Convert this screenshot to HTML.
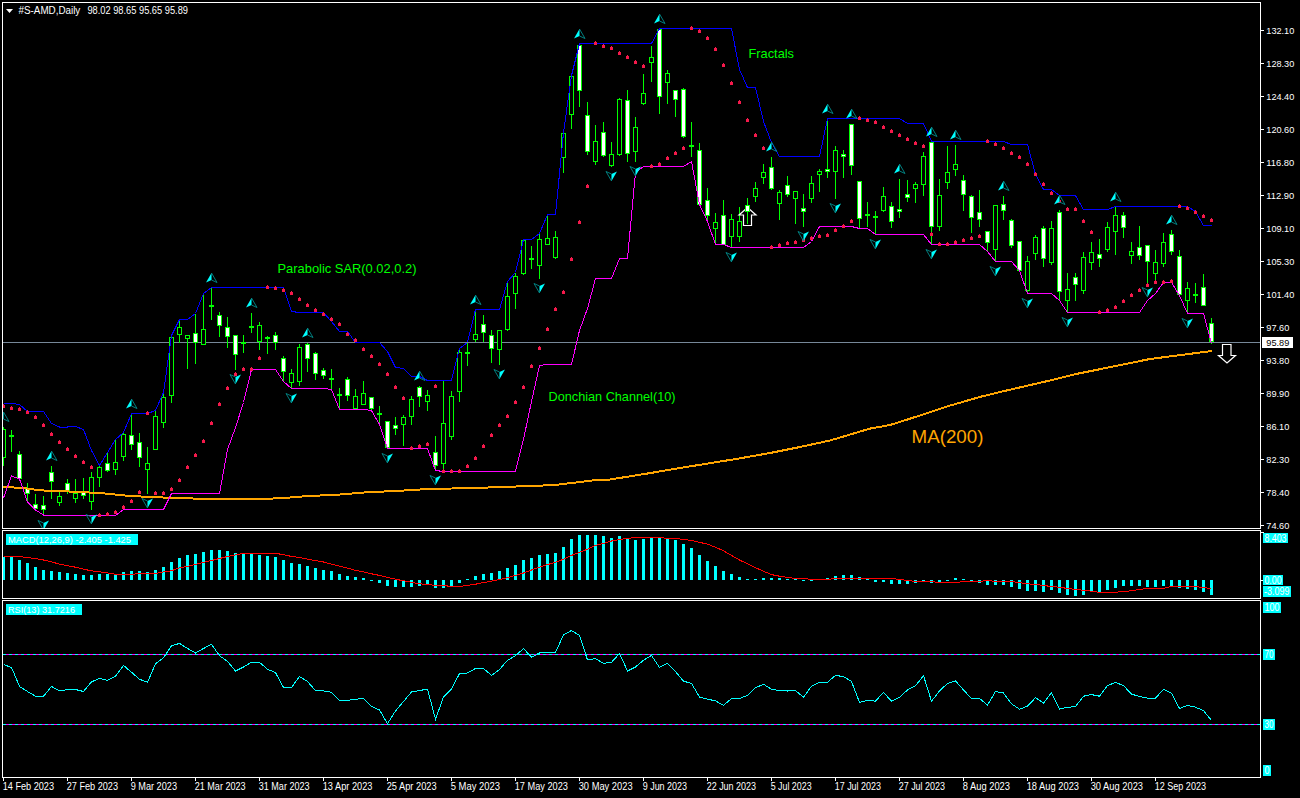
<!DOCTYPE html>
<html><head><meta charset="utf-8"><title>AMD Daily</title>
<style>html,body{margin:0;padding:0;background:#000;width:1300px;height:798px;overflow:hidden}</style>
</head><body><svg width="1300" height="798" viewBox="0 0 1300 798" style="display:block"><rect width="1300" height="798" fill="#000"/><defs><clipPath id="cm"><rect x="3" y="3" width="1257" height="525"/></clipPath><clipPath id="cd"><rect x="3" y="531" width="1257" height="67"/></clipPath><clipPath id="cr"><rect x="3" y="601" width="1257" height="176"/></clipPath></defs><g clip-path="url(#cm)"><rect x="3" y="342" width="1257" height="1" fill="#778899"/><g shape-rendering="crispEdges"><rect x="3" y="427" width="1" height="39" fill="#00FF00"/><rect x="1" y="429" width="5" height="29" fill="#00FF00"/><rect x="2" y="430" width="3" height="27" fill="#000000"/><rect x="11" y="430" width="1" height="22" fill="#00FF00"/><rect x="9" y="435" width="5" height="2" fill="#00FF00"/><rect x="19" y="451" width="1" height="28" fill="#00FF00"/><rect x="17" y="454" width="5" height="25" fill="#00FF00"/><rect x="18" y="455" width="3" height="23" fill="#FFFFFF"/><rect x="27" y="483" width="1" height="19" fill="#00FF00"/><rect x="25" y="488" width="5" height="6" fill="#00FF00"/><rect x="26" y="489" width="3" height="4" fill="#FFFFFF"/><rect x="35" y="494" width="1" height="16" fill="#00FF00"/><rect x="33" y="504" width="5" height="5" fill="#00FF00"/><rect x="34" y="505" width="3" height="3" fill="#FFFFFF"/><rect x="43" y="496" width="1" height="20" fill="#00FF00"/><rect x="41" y="505" width="5" height="5" fill="#00FF00"/><rect x="42" y="506" width="3" height="3" fill="#FFFFFF"/><rect x="51" y="466" width="1" height="33" fill="#00FF00"/><rect x="49" y="472" width="5" height="10" fill="#00FF00"/><rect x="50" y="473" width="3" height="8" fill="#FFFFFF"/><rect x="59" y="492" width="1" height="14" fill="#00FF00"/><rect x="57" y="496" width="5" height="7" fill="#00FF00"/><rect x="58" y="497" width="3" height="5" fill="#000000"/><rect x="67" y="479" width="1" height="15" fill="#00FF00"/><rect x="65" y="483" width="5" height="8" fill="#00FF00"/><rect x="66" y="484" width="3" height="6" fill="#FFFFFF"/><rect x="75" y="479" width="1" height="24" fill="#00FF00"/><rect x="73" y="493" width="5" height="6" fill="#00FF00"/><rect x="74" y="494" width="3" height="4" fill="#000000"/><rect x="83" y="478" width="1" height="21" fill="#00FF00"/><rect x="81" y="492" width="5" height="4" fill="#00FF00"/><rect x="82" y="493" width="3" height="2" fill="#FFFFFF"/><rect x="91" y="472" width="1" height="38" fill="#00FF00"/><rect x="89" y="477" width="5" height="25" fill="#00FF00"/><rect x="90" y="478" width="3" height="23" fill="#000000"/><rect x="99" y="466" width="1" height="21" fill="#00FF00"/><rect x="97" y="467" width="5" height="11" fill="#00FF00"/><rect x="98" y="468" width="3" height="9" fill="#000000"/><rect x="107" y="453" width="1" height="19" fill="#00FF00"/><rect x="105" y="463" width="5" height="8" fill="#00FF00"/><rect x="106" y="464" width="3" height="6" fill="#FFFFFF"/><rect x="115" y="440" width="1" height="35" fill="#00FF00"/><rect x="113" y="462" width="5" height="8" fill="#00FF00"/><rect x="114" y="463" width="3" height="6" fill="#000000"/><rect x="123" y="433" width="1" height="28" fill="#00FF00"/><rect x="121" y="434" width="5" height="23" fill="#00FF00"/><rect x="122" y="435" width="3" height="21" fill="#000000"/><rect x="131" y="414" width="1" height="36" fill="#00FF00"/><rect x="129" y="435" width="5" height="10" fill="#00FF00"/><rect x="130" y="436" width="3" height="8" fill="#FFFFFF"/><rect x="139" y="433" width="1" height="34" fill="#00FF00"/><rect x="137" y="442" width="5" height="16" fill="#00FF00"/><rect x="138" y="443" width="3" height="14" fill="#FFFFFF"/><rect x="147" y="447" width="1" height="47" fill="#00FF00"/><rect x="145" y="463" width="5" height="7" fill="#00FF00"/><rect x="146" y="464" width="3" height="5" fill="#000000"/><rect x="155" y="411" width="1" height="39" fill="#00FF00"/><rect x="153" y="416" width="5" height="34" fill="#00FF00"/><rect x="154" y="417" width="3" height="32" fill="#000000"/><rect x="163" y="393" width="1" height="35" fill="#00FF00"/><rect x="161" y="397" width="5" height="26" fill="#00FF00"/><rect x="162" y="398" width="3" height="24" fill="#000000"/><rect x="171" y="336" width="1" height="67" fill="#00FF00"/><rect x="169" y="337" width="5" height="59" fill="#00FF00"/><rect x="170" y="338" width="3" height="57" fill="#000000"/><rect x="179" y="320" width="1" height="23" fill="#00FF00"/><rect x="177" y="327" width="5" height="8" fill="#00FF00"/><rect x="178" y="328" width="3" height="6" fill="#000000"/><rect x="187" y="335" width="1" height="34" fill="#00FF00"/><rect x="185" y="335" width="5" height="4" fill="#00FF00"/><rect x="186" y="336" width="3" height="2" fill="#000000"/><rect x="195" y="314" width="1" height="50" fill="#00FF00"/><rect x="193" y="333" width="5" height="10" fill="#00FF00"/><rect x="194" y="334" width="3" height="8" fill="#FFFFFF"/><rect x="203" y="294" width="1" height="51" fill="#00FF00"/><rect x="201" y="329" width="5" height="16" fill="#00FF00"/><rect x="202" y="330" width="3" height="14" fill="#000000"/><rect x="211" y="288" width="1" height="32" fill="#00FF00"/><rect x="209" y="305" width="5" height="2" fill="#00FF00"/><rect x="219" y="312" width="1" height="25" fill="#00FF00"/><rect x="217" y="315" width="5" height="11" fill="#00FF00"/><rect x="218" y="316" width="3" height="9" fill="#FFFFFF"/><rect x="227" y="317" width="1" height="31" fill="#00FF00"/><rect x="225" y="327" width="5" height="10" fill="#00FF00"/><rect x="226" y="328" width="3" height="8" fill="#FFFFFF"/><rect x="235" y="335" width="1" height="35" fill="#00FF00"/><rect x="233" y="335" width="5" height="20" fill="#00FF00"/><rect x="234" y="336" width="3" height="18" fill="#FFFFFF"/><rect x="243" y="335" width="1" height="18" fill="#00FF00"/><rect x="241" y="342" width="5" height="2" fill="#00FF00"/><rect x="251" y="313" width="1" height="20" fill="#00FF00"/><rect x="249" y="326" width="5" height="2" fill="#00FF00"/><rect x="259" y="322" width="1" height="28" fill="#00FF00"/><rect x="257" y="325" width="5" height="17" fill="#00FF00"/><rect x="258" y="326" width="3" height="15" fill="#000000"/><rect x="267" y="336" width="1" height="18" fill="#00FF00"/><rect x="265" y="337" width="5" height="2" fill="#00FF00"/><rect x="275" y="332" width="1" height="18" fill="#00FF00"/><rect x="273" y="335" width="5" height="8" fill="#00FF00"/><rect x="274" y="336" width="3" height="6" fill="#FFFFFF"/><rect x="283" y="356" width="1" height="26" fill="#00FF00"/><rect x="281" y="358" width="5" height="14" fill="#00FF00"/><rect x="282" y="359" width="3" height="12" fill="#FFFFFF"/><rect x="291" y="369" width="1" height="20" fill="#00FF00"/><rect x="289" y="373" width="5" height="10" fill="#00FF00"/><rect x="290" y="374" width="3" height="8" fill="#000000"/><rect x="299" y="344" width="1" height="42" fill="#00FF00"/><rect x="297" y="347" width="5" height="35" fill="#00FF00"/><rect x="298" y="348" width="3" height="33" fill="#000000"/><rect x="307" y="343" width="1" height="29" fill="#00FF00"/><rect x="305" y="344" width="5" height="15" fill="#00FF00"/><rect x="306" y="345" width="3" height="13" fill="#FFFFFF"/><rect x="315" y="352" width="1" height="28" fill="#00FF00"/><rect x="313" y="353" width="5" height="21" fill="#00FF00"/><rect x="314" y="354" width="3" height="19" fill="#FFFFFF"/><rect x="323" y="368" width="1" height="11" fill="#00FF00"/><rect x="321" y="370" width="5" height="6" fill="#00FF00"/><rect x="322" y="371" width="3" height="4" fill="#FFFFFF"/><rect x="331" y="369" width="1" height="21" fill="#00FF00"/><rect x="329" y="378" width="5" height="2" fill="#00FF00"/><rect x="339" y="388" width="1" height="22" fill="#00FF00"/><rect x="337" y="394" width="5" height="2" fill="#00FF00"/><rect x="347" y="377" width="1" height="24" fill="#00FF00"/><rect x="345" y="379" width="5" height="17" fill="#00FF00"/><rect x="346" y="380" width="3" height="15" fill="#FFFFFF"/><rect x="355" y="389" width="1" height="21" fill="#00FF00"/><rect x="353" y="396" width="5" height="13" fill="#00FF00"/><rect x="354" y="397" width="3" height="11" fill="#000000"/><rect x="363" y="381" width="1" height="24" fill="#00FF00"/><rect x="361" y="393" width="5" height="12" fill="#00FF00"/><rect x="362" y="394" width="3" height="10" fill="#000000"/><rect x="371" y="397" width="1" height="14" fill="#00FF00"/><rect x="369" y="397" width="5" height="12" fill="#00FF00"/><rect x="370" y="398" width="3" height="10" fill="#FFFFFF"/><rect x="379" y="406" width="1" height="19" fill="#00FF00"/><rect x="377" y="413" width="5" height="2" fill="#00FF00"/><rect x="387" y="421" width="1" height="28" fill="#00FF00"/><rect x="385" y="421" width="5" height="27" fill="#00FF00"/><rect x="386" y="422" width="3" height="25" fill="#FFFFFF"/><rect x="395" y="417" width="1" height="18" fill="#00FF00"/><rect x="393" y="425" width="5" height="4" fill="#00FF00"/><rect x="394" y="426" width="3" height="2" fill="#FFFFFF"/><rect x="403" y="415" width="1" height="31" fill="#00FF00"/><rect x="401" y="417" width="5" height="8" fill="#00FF00"/><rect x="402" y="418" width="3" height="6" fill="#000000"/><rect x="411" y="396" width="1" height="29" fill="#00FF00"/><rect x="409" y="399" width="5" height="18" fill="#00FF00"/><rect x="410" y="400" width="3" height="16" fill="#000000"/><rect x="419" y="386" width="1" height="21" fill="#00FF00"/><rect x="417" y="387" width="5" height="10" fill="#00FF00"/><rect x="418" y="388" width="3" height="8" fill="#FFFFFF"/><rect x="427" y="390" width="1" height="21" fill="#00FF00"/><rect x="425" y="395" width="5" height="7" fill="#00FF00"/><rect x="426" y="396" width="3" height="5" fill="#000000"/><rect x="435" y="436" width="1" height="35" fill="#00FF00"/><rect x="433" y="452" width="5" height="14" fill="#00FF00"/><rect x="434" y="453" width="3" height="12" fill="#FFFFFF"/><rect x="443" y="381" width="1" height="91" fill="#00FF00"/><rect x="441" y="423" width="5" height="41" fill="#00FF00"/><rect x="442" y="424" width="3" height="39" fill="#000000"/><rect x="451" y="391" width="1" height="49" fill="#00FF00"/><rect x="449" y="396" width="5" height="41" fill="#00FF00"/><rect x="450" y="397" width="3" height="39" fill="#000000"/><rect x="459" y="349" width="1" height="53" fill="#00FF00"/><rect x="457" y="352" width="5" height="40" fill="#00FF00"/><rect x="458" y="353" width="3" height="38" fill="#000000"/><rect x="467" y="343" width="1" height="23" fill="#00FF00"/><rect x="465" y="352" width="5" height="2" fill="#00FF00"/><rect x="475" y="310" width="1" height="32" fill="#00FF00"/><rect x="473" y="334" width="5" height="6" fill="#00FF00"/><rect x="474" y="335" width="3" height="4" fill="#000000"/><rect x="483" y="315" width="1" height="27" fill="#00FF00"/><rect x="481" y="324" width="5" height="9" fill="#00FF00"/><rect x="482" y="325" width="3" height="7" fill="#FFFFFF"/><rect x="491" y="330" width="1" height="33" fill="#00FF00"/><rect x="489" y="335" width="5" height="14" fill="#00FF00"/><rect x="490" y="336" width="3" height="12" fill="#FFFFFF"/><rect x="499" y="330" width="1" height="35" fill="#00FF00"/><rect x="497" y="330" width="5" height="20" fill="#00FF00"/><rect x="498" y="331" width="3" height="18" fill="#000000"/><rect x="507" y="282" width="1" height="49" fill="#00FF00"/><rect x="505" y="296" width="5" height="34" fill="#00FF00"/><rect x="506" y="297" width="3" height="32" fill="#000000"/><rect x="515" y="273" width="1" height="36" fill="#00FF00"/><rect x="513" y="276" width="5" height="18" fill="#00FF00"/><rect x="514" y="277" width="3" height="16" fill="#000000"/><rect x="523" y="240" width="1" height="35" fill="#00FF00"/><rect x="521" y="240" width="5" height="34" fill="#00FF00"/><rect x="522" y="241" width="3" height="32" fill="#000000"/><rect x="531" y="246" width="1" height="23" fill="#00FF00"/><rect x="529" y="258" width="5" height="2" fill="#00FF00"/><rect x="539" y="234" width="1" height="45" fill="#00FF00"/><rect x="537" y="239" width="5" height="27" fill="#00FF00"/><rect x="538" y="240" width="3" height="25" fill="#000000"/><rect x="547" y="215" width="1" height="30" fill="#00FF00"/><rect x="545" y="238" width="5" height="7" fill="#00FF00"/><rect x="546" y="239" width="3" height="5" fill="#000000"/><rect x="555" y="231" width="1" height="28" fill="#00FF00"/><rect x="553" y="237" width="5" height="21" fill="#00FF00"/><rect x="554" y="238" width="3" height="19" fill="#000000"/><rect x="563" y="133" width="1" height="40" fill="#00FF00"/><rect x="561" y="133" width="5" height="25" fill="#00FF00"/><rect x="562" y="134" width="3" height="23" fill="#000000"/><rect x="571" y="76" width="1" height="53" fill="#00FF00"/><rect x="569" y="76" width="5" height="39" fill="#00FF00"/><rect x="570" y="77" width="3" height="37" fill="#000000"/><rect x="579" y="44" width="1" height="63" fill="#00FF00"/><rect x="577" y="45" width="5" height="46" fill="#00FF00"/><rect x="578" y="46" width="3" height="44" fill="#FFFFFF"/><rect x="587" y="102" width="1" height="53" fill="#00FF00"/><rect x="585" y="115" width="5" height="37" fill="#00FF00"/><rect x="586" y="116" width="3" height="35" fill="#FFFFFF"/><rect x="595" y="125" width="1" height="40" fill="#00FF00"/><rect x="593" y="141" width="5" height="21" fill="#00FF00"/><rect x="594" y="142" width="3" height="19" fill="#000000"/><rect x="603" y="122" width="1" height="35" fill="#00FF00"/><rect x="601" y="132" width="5" height="24" fill="#00FF00"/><rect x="602" y="133" width="3" height="22" fill="#FFFFFF"/><rect x="611" y="142" width="1" height="25" fill="#00FF00"/><rect x="609" y="154" width="5" height="12" fill="#00FF00"/><rect x="610" y="155" width="3" height="10" fill="#000000"/><rect x="619" y="98" width="1" height="58" fill="#00FF00"/><rect x="617" y="99" width="5" height="56" fill="#00FF00"/><rect x="618" y="100" width="3" height="54" fill="#000000"/><rect x="627" y="90" width="1" height="72" fill="#00FF00"/><rect x="625" y="100" width="5" height="54" fill="#00FF00"/><rect x="626" y="101" width="3" height="52" fill="#FFFFFF"/><rect x="635" y="117" width="1" height="45" fill="#00FF00"/><rect x="633" y="127" width="5" height="25" fill="#00FF00"/><rect x="634" y="128" width="3" height="23" fill="#000000"/><rect x="643" y="74" width="1" height="31" fill="#00FF00"/><rect x="641" y="93" width="5" height="11" fill="#00FF00"/><rect x="642" y="94" width="3" height="9" fill="#000000"/><rect x="651" y="46" width="1" height="36" fill="#00FF00"/><rect x="649" y="57" width="5" height="6" fill="#00FF00"/><rect x="650" y="58" width="3" height="4" fill="#000000"/><rect x="659" y="29" width="1" height="85" fill="#00FF00"/><rect x="657" y="29" width="5" height="68" fill="#00FF00"/><rect x="658" y="30" width="3" height="66" fill="#FFFFFF"/><rect x="667" y="70" width="1" height="34" fill="#00FF00"/><rect x="665" y="73" width="5" height="10" fill="#00FF00"/><rect x="666" y="74" width="3" height="8" fill="#000000"/><rect x="675" y="90" width="1" height="27" fill="#00FF00"/><rect x="673" y="90" width="5" height="10" fill="#00FF00"/><rect x="674" y="91" width="3" height="8" fill="#FFFFFF"/><rect x="683" y="88" width="1" height="50" fill="#00FF00"/><rect x="681" y="89" width="5" height="48" fill="#00FF00"/><rect x="682" y="90" width="3" height="46" fill="#FFFFFF"/><rect x="691" y="122" width="1" height="35" fill="#00FF00"/><rect x="689" y="145" width="5" height="2" fill="#00FF00"/><rect x="699" y="143" width="1" height="62" fill="#00FF00"/><rect x="697" y="150" width="5" height="55" fill="#00FF00"/><rect x="698" y="151" width="3" height="53" fill="#FFFFFF"/><rect x="707" y="188" width="1" height="34" fill="#00FF00"/><rect x="705" y="200" width="5" height="16" fill="#00FF00"/><rect x="706" y="201" width="3" height="14" fill="#FFFFFF"/><rect x="715" y="213" width="1" height="32" fill="#00FF00"/><rect x="713" y="222" width="5" height="7" fill="#00FF00"/><rect x="714" y="223" width="3" height="5" fill="#000000"/><rect x="723" y="200" width="1" height="45" fill="#00FF00"/><rect x="721" y="215" width="5" height="30" fill="#00FF00"/><rect x="722" y="216" width="3" height="28" fill="#FFFFFF"/><rect x="731" y="214" width="1" height="34" fill="#00FF00"/><rect x="729" y="219" width="5" height="18" fill="#00FF00"/><rect x="730" y="220" width="3" height="16" fill="#000000"/><rect x="739" y="207" width="1" height="35" fill="#00FF00"/><rect x="737" y="221" width="5" height="16" fill="#00FF00"/><rect x="738" y="222" width="3" height="14" fill="#000000"/><rect x="747" y="198" width="1" height="26" fill="#00FF00"/><rect x="745" y="205" width="5" height="7" fill="#00FF00"/><rect x="746" y="206" width="3" height="5" fill="#FFFFFF"/><rect x="755" y="182" width="1" height="20" fill="#00FF00"/><rect x="753" y="188" width="5" height="9" fill="#00FF00"/><rect x="754" y="189" width="3" height="7" fill="#000000"/><rect x="763" y="164" width="1" height="20" fill="#00FF00"/><rect x="761" y="172" width="5" height="6" fill="#00FF00"/><rect x="762" y="173" width="3" height="4" fill="#000000"/><rect x="771" y="157" width="1" height="33" fill="#00FF00"/><rect x="769" y="167" width="5" height="22" fill="#00FF00"/><rect x="770" y="168" width="3" height="20" fill="#FFFFFF"/><rect x="779" y="190" width="1" height="30" fill="#00FF00"/><rect x="777" y="192" width="5" height="12" fill="#00FF00"/><rect x="778" y="193" width="3" height="10" fill="#000000"/><rect x="787" y="176" width="1" height="21" fill="#00FF00"/><rect x="785" y="185" width="5" height="10" fill="#00FF00"/><rect x="786" y="186" width="3" height="8" fill="#FFFFFF"/><rect x="795" y="191" width="1" height="33" fill="#00FF00"/><rect x="793" y="191" width="5" height="8" fill="#00FF00"/><rect x="794" y="192" width="3" height="6" fill="#000000"/><rect x="803" y="194" width="1" height="33" fill="#00FF00"/><rect x="801" y="208" width="5" height="4" fill="#00FF00"/><rect x="802" y="209" width="3" height="2" fill="#FFFFFF"/><rect x="811" y="176" width="1" height="27" fill="#00FF00"/><rect x="809" y="183" width="5" height="16" fill="#00FF00"/><rect x="810" y="184" width="3" height="14" fill="#000000"/><rect x="819" y="169" width="1" height="23" fill="#00FF00"/><rect x="817" y="171" width="5" height="4" fill="#00FF00"/><rect x="818" y="172" width="3" height="2" fill="#000000"/><rect x="827" y="119" width="1" height="59" fill="#00FF00"/><rect x="825" y="169" width="5" height="3" fill="#00FF00"/><rect x="826" y="170" width="3" height="1" fill="#FFFFFF"/><rect x="835" y="146" width="1" height="53" fill="#00FF00"/><rect x="833" y="150" width="5" height="22" fill="#00FF00"/><rect x="834" y="151" width="3" height="20" fill="#000000"/><rect x="843" y="150" width="1" height="28" fill="#00FF00"/><rect x="841" y="154" width="5" height="3" fill="#00FF00"/><rect x="842" y="155" width="3" height="1" fill="#FFFFFF"/><rect x="851" y="124" width="1" height="51" fill="#00FF00"/><rect x="849" y="124" width="5" height="42" fill="#00FF00"/><rect x="850" y="125" width="3" height="40" fill="#FFFFFF"/><rect x="859" y="181" width="1" height="48" fill="#00FF00"/><rect x="857" y="181" width="5" height="38" fill="#00FF00"/><rect x="858" y="182" width="3" height="36" fill="#FFFFFF"/><rect x="867" y="202" width="1" height="25" fill="#00FF00"/><rect x="865" y="214" width="5" height="2" fill="#00FF00"/><rect x="875" y="211" width="1" height="24" fill="#00FF00"/><rect x="873" y="216" width="5" height="2" fill="#00FF00"/><rect x="883" y="187" width="1" height="25" fill="#00FF00"/><rect x="881" y="196" width="5" height="15" fill="#00FF00"/><rect x="882" y="197" width="3" height="13" fill="#000000"/><rect x="891" y="202" width="1" height="26" fill="#00FF00"/><rect x="889" y="206" width="5" height="16" fill="#00FF00"/><rect x="890" y="207" width="3" height="14" fill="#FFFFFF"/><rect x="899" y="179" width="1" height="39" fill="#00FF00"/><rect x="897" y="209" width="5" height="3" fill="#00FF00"/><rect x="898" y="210" width="3" height="1" fill="#FFFFFF"/><rect x="907" y="180" width="1" height="22" fill="#00FF00"/><rect x="905" y="194" width="5" height="4" fill="#00FF00"/><rect x="906" y="195" width="3" height="2" fill="#FFFFFF"/><rect x="915" y="182" width="1" height="21" fill="#00FF00"/><rect x="913" y="184" width="5" height="5" fill="#00FF00"/><rect x="914" y="185" width="3" height="3" fill="#000000"/><rect x="923" y="152" width="1" height="44" fill="#00FF00"/><rect x="921" y="156" width="5" height="29" fill="#00FF00"/><rect x="922" y="157" width="3" height="27" fill="#000000"/><rect x="931" y="142" width="1" height="103" fill="#00FF00"/><rect x="929" y="142" width="5" height="85" fill="#00FF00"/><rect x="930" y="143" width="3" height="83" fill="#FFFFFF"/><rect x="939" y="179" width="1" height="52" fill="#00FF00"/><rect x="937" y="195" width="5" height="32" fill="#00FF00"/><rect x="938" y="196" width="3" height="30" fill="#000000"/><rect x="947" y="146" width="1" height="43" fill="#00FF00"/><rect x="945" y="172" width="5" height="11" fill="#00FF00"/><rect x="946" y="173" width="3" height="9" fill="#000000"/><rect x="955" y="145" width="1" height="31" fill="#00FF00"/><rect x="953" y="164" width="5" height="6" fill="#00FF00"/><rect x="954" y="165" width="3" height="4" fill="#000000"/><rect x="963" y="175" width="1" height="36" fill="#00FF00"/><rect x="961" y="180" width="5" height="15" fill="#00FF00"/><rect x="962" y="181" width="3" height="13" fill="#FFFFFF"/><rect x="971" y="195" width="1" height="38" fill="#00FF00"/><rect x="969" y="196" width="5" height="22" fill="#00FF00"/><rect x="970" y="197" width="3" height="20" fill="#FFFFFF"/><rect x="979" y="190" width="1" height="37" fill="#00FF00"/><rect x="977" y="212" width="5" height="8" fill="#00FF00"/><rect x="978" y="213" width="3" height="6" fill="#FFFFFF"/><rect x="987" y="231" width="1" height="21" fill="#00FF00"/><rect x="985" y="231" width="5" height="12" fill="#00FF00"/><rect x="986" y="232" width="3" height="10" fill="#FFFFFF"/><rect x="995" y="205" width="1" height="57" fill="#00FF00"/><rect x="993" y="205" width="5" height="45" fill="#00FF00"/><rect x="994" y="206" width="3" height="43" fill="#000000"/><rect x="1003" y="196" width="1" height="24" fill="#00FF00"/><rect x="1001" y="204" width="5" height="7" fill="#00FF00"/><rect x="1002" y="205" width="3" height="5" fill="#FFFFFF"/><rect x="1011" y="219" width="1" height="29" fill="#00FF00"/><rect x="1009" y="220" width="5" height="26" fill="#00FF00"/><rect x="1010" y="221" width="3" height="24" fill="#FFFFFF"/><rect x="1019" y="241" width="1" height="30" fill="#00FF00"/><rect x="1017" y="241" width="5" height="30" fill="#00FF00"/><rect x="1018" y="242" width="3" height="28" fill="#FFFFFF"/><rect x="1027" y="256" width="1" height="38" fill="#00FF00"/><rect x="1025" y="261" width="5" height="30" fill="#00FF00"/><rect x="1026" y="262" width="3" height="28" fill="#000000"/><rect x="1035" y="235" width="1" height="25" fill="#00FF00"/><rect x="1033" y="237" width="5" height="17" fill="#00FF00"/><rect x="1034" y="238" width="3" height="15" fill="#000000"/><rect x="1043" y="226" width="1" height="41" fill="#00FF00"/><rect x="1041" y="228" width="5" height="31" fill="#00FF00"/><rect x="1042" y="229" width="3" height="29" fill="#FFFFFF"/><rect x="1051" y="221" width="1" height="44" fill="#00FF00"/><rect x="1049" y="228" width="5" height="35" fill="#00FF00"/><rect x="1050" y="229" width="3" height="33" fill="#000000"/><rect x="1059" y="210" width="1" height="91" fill="#00FF00"/><rect x="1057" y="212" width="5" height="80" fill="#00FF00"/><rect x="1058" y="213" width="3" height="78" fill="#FFFFFF"/><rect x="1067" y="273" width="1" height="40" fill="#00FF00"/><rect x="1065" y="289" width="5" height="12" fill="#00FF00"/><rect x="1066" y="290" width="3" height="10" fill="#000000"/><rect x="1075" y="273" width="1" height="28" fill="#00FF00"/><rect x="1073" y="277" width="5" height="8" fill="#00FF00"/><rect x="1074" y="278" width="3" height="6" fill="#FFFFFF"/><rect x="1083" y="252" width="1" height="42" fill="#00FF00"/><rect x="1081" y="257" width="5" height="34" fill="#00FF00"/><rect x="1082" y="258" width="3" height="32" fill="#000000"/><rect x="1091" y="242" width="1" height="28" fill="#00FF00"/><rect x="1089" y="252" width="5" height="11" fill="#00FF00"/><rect x="1090" y="253" width="3" height="9" fill="#000000"/><rect x="1099" y="239" width="1" height="28" fill="#00FF00"/><rect x="1097" y="254" width="5" height="5" fill="#00FF00"/><rect x="1098" y="255" width="3" height="3" fill="#FFFFFF"/><rect x="1107" y="222" width="1" height="30" fill="#00FF00"/><rect x="1105" y="227" width="5" height="23" fill="#00FF00"/><rect x="1106" y="228" width="3" height="21" fill="#000000"/><rect x="1115" y="207" width="1" height="48" fill="#00FF00"/><rect x="1113" y="215" width="5" height="17" fill="#00FF00"/><rect x="1114" y="216" width="3" height="15" fill="#000000"/><rect x="1123" y="212" width="1" height="26" fill="#00FF00"/><rect x="1121" y="215" width="5" height="13" fill="#00FF00"/><rect x="1122" y="216" width="3" height="11" fill="#FFFFFF"/><rect x="1131" y="242" width="1" height="22" fill="#00FF00"/><rect x="1129" y="251" width="5" height="5" fill="#00FF00"/><rect x="1130" y="252" width="3" height="3" fill="#000000"/><rect x="1139" y="226" width="1" height="34" fill="#00FF00"/><rect x="1137" y="247" width="5" height="9" fill="#00FF00"/><rect x="1138" y="248" width="3" height="7" fill="#FFFFFF"/><rect x="1147" y="245" width="1" height="38" fill="#00FF00"/><rect x="1145" y="245" width="5" height="17" fill="#00FF00"/><rect x="1146" y="246" width="3" height="15" fill="#FFFFFF"/><rect x="1155" y="250" width="1" height="31" fill="#00FF00"/><rect x="1153" y="262" width="5" height="12" fill="#00FF00"/><rect x="1154" y="263" width="3" height="10" fill="#000000"/><rect x="1163" y="233" width="1" height="34" fill="#00FF00"/><rect x="1161" y="242" width="5" height="22" fill="#00FF00"/><rect x="1162" y="243" width="3" height="20" fill="#000000"/><rect x="1171" y="230" width="1" height="25" fill="#00FF00"/><rect x="1169" y="234" width="5" height="18" fill="#00FF00"/><rect x="1170" y="235" width="3" height="16" fill="#FFFFFF"/><rect x="1179" y="250" width="1" height="46" fill="#00FF00"/><rect x="1177" y="256" width="5" height="39" fill="#00FF00"/><rect x="1178" y="257" width="3" height="37" fill="#FFFFFF"/><rect x="1187" y="282" width="1" height="32" fill="#00FF00"/><rect x="1185" y="288" width="5" height="13" fill="#00FF00"/><rect x="1186" y="289" width="3" height="11" fill="#000000"/><rect x="1195" y="283" width="1" height="20" fill="#00FF00"/><rect x="1193" y="294" width="5" height="2" fill="#00FF00"/><rect x="1203" y="274" width="1" height="32" fill="#00FF00"/><rect x="1201" y="287" width="5" height="19" fill="#00FF00"/><rect x="1202" y="288" width="3" height="17" fill="#FFFFFF"/><rect x="1211" y="318" width="1" height="26" fill="#00FF00"/><rect x="1209" y="323" width="5" height="19" fill="#00FF00"/><rect x="1210" y="324" width="3" height="17" fill="#FFFFFF"/></g><polyline points="3,487 24,488 40,490.4 60,491 77,492 100,493 130,496 160,497.4 190,498.4 220,499.4 250,499.4 276,498.4 292,497.4 308,496 332,495 348,494 356,493 372,492 396,491 412,490 428,489 476,488 500,487 532,486 555,485 563,484 572,483 580,482 596,480 610,479.5 650,473.1 680,468 710,463.2 740,458.3 770,453 800,447 830,440.5 870,428.6 890,425 920,415.5 950,405.6 980,396.9 1000,392 1050,380.5 1076,374 1100,369.2 1150,359 1212,351" fill="none" stroke="#FFA500" stroke-width="2" shape-rendering="crispEdges"/><polyline points="3.5,403.5 11.5,403.5 19.5,404.5 27.5,411.5 35.5,411.5 43.5,411.5 51.5,423.5 59.5,427 67.5,427 75.5,426.5 83.5,429.5 91.5,450.5 99.5,465.5 107.5,452.5 115.5,439.5 123.5,432.5 131.5,413.5 139.5,413.5 147.5,413.5 155.5,410.5 163.5,392.5 171.5,335.5 179.5,319.5 187.5,319.5 195.5,313.5 203.5,293.5 211.5,287.5 219.5,287.5 227.5,287.5 235.5,287.5 243.5,287.5 251.5,287.5 259.5,287.5 267.5,287.5 275.5,287.5 283.5,287.5 291.5,311.5 299.5,312.5 307.5,312.5 315.5,312.5 323.5,312.5 331.5,321.5 339.5,331.5 347.5,331.5 355.5,342.5 363.5,342.5 371.5,342.5 379.5,342.5 387.5,351.5 395.5,367.5 403.5,368.5 411.5,376.5 419.5,376.5 427.5,380.5 435.5,380.5 443.5,380.5 451.5,380.5 459.5,348.5 467.5,342.5 475.5,309.5 483.5,309.5 491.5,309.5 499.5,309.5 507.5,281.5 515.5,272.5 523.5,239.5 531.5,239.5 539.5,233.5 547.5,214.5 555.5,214.5 563.5,132.5 571.5,75.5 579.5,43.5 587.5,43.5 595.5,43.5 603.5,43.5 611.5,43.5 619.5,43.5 627.5,43.5 635.5,43.5 643.5,43.5 651.5,43.5 659.5,28.5 667.5,28.5 675.5,28.5 683.5,28.5 691.5,28.5 699.5,28.5 707.5,28.5 715.5,28.5 723.5,28.5 731.5,28.5 739.5,69.5 747.5,87.5 755.5,87.5 763.5,121.5 771.5,142.5 779.5,156.5 787.5,156.5 795.5,156.5 803.5,156.5 811.5,156.5 819.5,156.5 827.5,118.5 835.5,118.5 843.5,118.5 851.5,118.5 859.5,118.5 867.5,118.5 875.5,118.5 883.5,118.5 891.5,118.5 899.5,118.5 907.5,123.5 915.5,123.5 923.5,123.5 931.5,141.5 939.5,141.5 947.5,141.5 955.5,141.5 963.5,141.5 971.5,141.5 979.5,141.5 987.5,141.5 995.5,141.5 1003.5,141.5 1011.5,144.5 1019.5,144.5 1027.5,144.5 1035.5,174.5 1043.5,189.5 1051.5,189.5 1059.5,195.5 1067.5,195.5 1075.5,195.5 1083.5,209.5 1091.5,209.5 1099.5,209.5 1107.5,209.5 1115.5,206.5 1123.5,206.5 1131.5,206.5 1139.5,206.5 1147.5,206.5 1155.5,206.5 1163.5,206.5 1171.5,206.5 1179.5,206.5 1187.5,206.5 1195.5,211.5 1203.5,225.5 1211.5,225.5" fill="none" stroke="#0000FF" stroke-width="1" shape-rendering="crispEdges"/><polyline points="3.5,498 11.5,476 19.5,479 27.5,502 35.5,510 43.5,515 51.5,515 59.5,515 67.5,515 75.5,515.5 83.5,515.5 91.5,515.5 99.5,515.5 107.5,515.5 115.5,515.5 123.5,509.5 131.5,509.5 139.5,509.5 147.5,509.5 155.5,509.5 163.5,509.5 171.5,493.5 179.5,493.5 187.5,493.5 195.5,493.5 203.5,493.5 211.5,493.5 219.5,493.5 227.5,449.5 235.5,427.5 243.5,402.5 251.5,369.5 259.5,369.5 267.5,369.5 275.5,369.5 283.5,381.5 291.5,388.5 299.5,388.5 307.5,388.5 315.5,388.5 323.5,388.5 331.5,389.5 339.5,409.5 347.5,409.5 355.5,409.5 363.5,409.5 371.5,410.5 379.5,424.5 387.5,448.5 395.5,448.5 403.5,448.5 411.5,448.5 419.5,448.5 427.5,448.5 435.5,470.5 443.5,471.5 451.5,471.5 459.5,471.5 467.5,471.5 475.5,471.5 483.5,471.5 491.5,471.5 499.5,471.5 507.5,471.5 515.5,471.5 523.5,439.5 531.5,401.5 539.5,365.5 547.5,364.5 555.5,364.5 563.5,364.5 571.5,364.5 579.5,330.5 587.5,308.5 595.5,278.5 603.5,278.5 611.5,278.5 619.5,258.5 627.5,258.5 635.5,172.5 643.5,166.5 651.5,166.5 659.5,166.5 667.5,166.5 675.5,166.5 683.5,166.5 691.5,161.5 699.5,204.5 707.5,221.5 715.5,244.5 723.5,244.5 731.5,247.5 739.5,247.5 747.5,247.5 755.5,247.5 763.5,247.5 771.5,247.5 779.5,247.5 787.5,247.5 795.5,247.5 803.5,247.5 811.5,241.5 819.5,226.5 827.5,226.5 835.5,226.5 843.5,226.5 851.5,226.5 859.5,228.5 867.5,228.5 875.5,234.5 883.5,234.5 891.5,234.5 899.5,234.5 907.5,234.5 915.5,234.5 923.5,234.5 931.5,244.5 939.5,244.5 947.5,244.5 955.5,244.5 963.5,244.5 971.5,244.5 979.5,244.5 987.5,251.5 995.5,261.5 1003.5,261.5 1011.5,261.5 1019.5,270.5 1027.5,293.5 1035.5,293.5 1043.5,293.5 1051.5,293.5 1059.5,300.5 1067.5,312.5 1075.5,312.5 1083.5,312.5 1091.5,312.5 1099.5,312.5 1107.5,312.5 1115.5,312.5 1123.5,312.5 1131.5,312.5 1139.5,312.5 1147.5,300.5 1155.5,293.5 1163.5,282.5 1171.5,282.5 1179.5,295.5 1187.5,313.5 1195.5,313.5 1203.5,313.5 1211.5,343.5" fill="none" stroke="#FF00FF" stroke-width="1" shape-rendering="crispEdges"/><g fill="#F5194B" shape-rendering="crispEdges"><rect x="2" y="405" width="3" height="3"/><rect x="3" y="404" width="1" height="1"/><rect x="10" y="407" width="3" height="3"/><rect x="11" y="406" width="1" height="1"/><rect x="18" y="408" width="3" height="3"/><rect x="19" y="407" width="1" height="1"/><rect x="26" y="411" width="3" height="3"/><rect x="27" y="410" width="1" height="1"/><rect x="34" y="416" width="3" height="3"/><rect x="35" y="415" width="1" height="1"/><rect x="42" y="424" width="3" height="3"/><rect x="43" y="423" width="1" height="1"/><rect x="50" y="433" width="3" height="3"/><rect x="51" y="432" width="1" height="1"/><rect x="58" y="441" width="3" height="3"/><rect x="59" y="440" width="1" height="1"/><rect x="66" y="448" width="3" height="3"/><rect x="67" y="447" width="1" height="1"/><rect x="74" y="455" width="3" height="3"/><rect x="75" y="454" width="1" height="1"/><rect x="82" y="461" width="3" height="3"/><rect x="83" y="460" width="1" height="1"/><rect x="90" y="466" width="3" height="3"/><rect x="91" y="465" width="1" height="1"/><rect x="98" y="514" width="3" height="3"/><rect x="99" y="513" width="1" height="1"/><rect x="106" y="513" width="3" height="3"/><rect x="107" y="512" width="1" height="1"/><rect x="114" y="511" width="3" height="3"/><rect x="115" y="510" width="1" height="1"/><rect x="122" y="506" width="3" height="3"/><rect x="123" y="505" width="1" height="1"/><rect x="130" y="500" width="3" height="3"/><rect x="131" y="499" width="1" height="1"/><rect x="138" y="491" width="3" height="3"/><rect x="139" y="490" width="1" height="1"/><rect x="146" y="412" width="3" height="3"/><rect x="147" y="411" width="1" height="1"/><rect x="154" y="492" width="3" height="3"/><rect x="155" y="491" width="1" height="1"/><rect x="162" y="492" width="3" height="3"/><rect x="163" y="491" width="1" height="1"/><rect x="170" y="488" width="3" height="3"/><rect x="171" y="487" width="1" height="1"/><rect x="178" y="479" width="3" height="3"/><rect x="179" y="478" width="1" height="1"/><rect x="186" y="466" width="3" height="3"/><rect x="187" y="465" width="1" height="1"/><rect x="194" y="454" width="3" height="3"/><rect x="195" y="453" width="1" height="1"/><rect x="202" y="440" width="3" height="3"/><rect x="203" y="439" width="1" height="1"/><rect x="210" y="422" width="3" height="3"/><rect x="211" y="421" width="1" height="1"/><rect x="218" y="403" width="3" height="3"/><rect x="219" y="402" width="1" height="1"/><rect x="226" y="387" width="3" height="3"/><rect x="227" y="386" width="1" height="1"/><rect x="234" y="373" width="3" height="3"/><rect x="235" y="372" width="1" height="1"/><rect x="242" y="368" width="3" height="3"/><rect x="243" y="367" width="1" height="1"/><rect x="250" y="368" width="3" height="3"/><rect x="251" y="367" width="1" height="1"/><rect x="258" y="357" width="3" height="3"/><rect x="259" y="356" width="1" height="1"/><rect x="266" y="286" width="3" height="3"/><rect x="267" y="285" width="1" height="1"/><rect x="274" y="287" width="3" height="3"/><rect x="275" y="286" width="1" height="1"/><rect x="282" y="289" width="3" height="3"/><rect x="283" y="288" width="1" height="1"/><rect x="290" y="292" width="3" height="3"/><rect x="291" y="291" width="1" height="1"/><rect x="298" y="298" width="3" height="3"/><rect x="299" y="297" width="1" height="1"/><rect x="306" y="304" width="3" height="3"/><rect x="307" y="303" width="1" height="1"/><rect x="314" y="309" width="3" height="3"/><rect x="315" y="308" width="1" height="1"/><rect x="322" y="313" width="3" height="3"/><rect x="323" y="312" width="1" height="1"/><rect x="330" y="318" width="3" height="3"/><rect x="331" y="317" width="1" height="1"/><rect x="338" y="323" width="3" height="3"/><rect x="339" y="322" width="1" height="1"/><rect x="346" y="333" width="3" height="3"/><rect x="347" y="332" width="1" height="1"/><rect x="354" y="339" width="3" height="3"/><rect x="355" y="338" width="1" height="1"/><rect x="362" y="348" width="3" height="3"/><rect x="363" y="347" width="1" height="1"/><rect x="370" y="355" width="3" height="3"/><rect x="371" y="354" width="1" height="1"/><rect x="378" y="363" width="3" height="3"/><rect x="379" y="362" width="1" height="1"/><rect x="386" y="373" width="3" height="3"/><rect x="387" y="372" width="1" height="1"/><rect x="394" y="386" width="3" height="3"/><rect x="395" y="385" width="1" height="1"/><rect x="402" y="397" width="3" height="3"/><rect x="403" y="396" width="1" height="1"/><rect x="410" y="447" width="3" height="3"/><rect x="411" y="446" width="1" height="1"/><rect x="418" y="445" width="3" height="3"/><rect x="419" y="444" width="1" height="1"/><rect x="426" y="443" width="3" height="3"/><rect x="427" y="442" width="1" height="1"/><rect x="434" y="385" width="3" height="3"/><rect x="435" y="384" width="1" height="1"/><rect x="442" y="470" width="3" height="3"/><rect x="443" y="469" width="1" height="1"/><rect x="450" y="470" width="3" height="3"/><rect x="451" y="469" width="1" height="1"/><rect x="458" y="470" width="3" height="3"/><rect x="459" y="469" width="1" height="1"/><rect x="466" y="465" width="3" height="3"/><rect x="467" y="464" width="1" height="1"/><rect x="474" y="457" width="3" height="3"/><rect x="475" y="456" width="1" height="1"/><rect x="482" y="445" width="3" height="3"/><rect x="483" y="444" width="1" height="1"/><rect x="490" y="434" width="3" height="3"/><rect x="491" y="433" width="1" height="1"/><rect x="498" y="424" width="3" height="3"/><rect x="499" y="423" width="1" height="1"/><rect x="506" y="415" width="3" height="3"/><rect x="507" y="414" width="1" height="1"/><rect x="514" y="401" width="3" height="3"/><rect x="515" y="400" width="1" height="1"/><rect x="522" y="386" width="3" height="3"/><rect x="523" y="385" width="1" height="1"/><rect x="530" y="365" width="3" height="3"/><rect x="531" y="364" width="1" height="1"/><rect x="538" y="347" width="3" height="3"/><rect x="539" y="346" width="1" height="1"/><rect x="546" y="328" width="3" height="3"/><rect x="547" y="327" width="1" height="1"/><rect x="554" y="308" width="3" height="3"/><rect x="555" y="307" width="1" height="1"/><rect x="562" y="291" width="3" height="3"/><rect x="563" y="290" width="1" height="1"/><rect x="570" y="258" width="3" height="3"/><rect x="571" y="257" width="1" height="1"/><rect x="578" y="221" width="3" height="3"/><rect x="579" y="220" width="1" height="1"/><rect x="586" y="185" width="3" height="3"/><rect x="587" y="184" width="1" height="1"/><rect x="594" y="42" width="3" height="3"/><rect x="595" y="41" width="1" height="1"/><rect x="602" y="45" width="3" height="3"/><rect x="603" y="44" width="1" height="1"/><rect x="610" y="47" width="3" height="3"/><rect x="611" y="46" width="1" height="1"/><rect x="618" y="52" width="3" height="3"/><rect x="619" y="51" width="1" height="1"/><rect x="626" y="56" width="3" height="3"/><rect x="627" y="55" width="1" height="1"/><rect x="634" y="61" width="3" height="3"/><rect x="635" y="60" width="1" height="1"/><rect x="642" y="65" width="3" height="3"/><rect x="643" y="64" width="1" height="1"/><rect x="650" y="165" width="3" height="3"/><rect x="651" y="164" width="1" height="1"/><rect x="658" y="163" width="3" height="3"/><rect x="659" y="162" width="1" height="1"/><rect x="666" y="157" width="3" height="3"/><rect x="667" y="156" width="1" height="1"/><rect x="674" y="152" width="3" height="3"/><rect x="675" y="151" width="1" height="1"/><rect x="682" y="147" width="3" height="3"/><rect x="683" y="146" width="1" height="1"/><rect x="690" y="27" width="3" height="3"/><rect x="691" y="26" width="1" height="1"/><rect x="698" y="30" width="3" height="3"/><rect x="699" y="29" width="1" height="1"/><rect x="706" y="37" width="3" height="3"/><rect x="707" y="36" width="1" height="1"/><rect x="714" y="48" width="3" height="3"/><rect x="715" y="47" width="1" height="1"/><rect x="722" y="64" width="3" height="3"/><rect x="723" y="63" width="1" height="1"/><rect x="730" y="82" width="3" height="3"/><rect x="731" y="81" width="1" height="1"/><rect x="738" y="101" width="3" height="3"/><rect x="739" y="100" width="1" height="1"/><rect x="746" y="119" width="3" height="3"/><rect x="747" y="118" width="1" height="1"/><rect x="754" y="134" width="3" height="3"/><rect x="755" y="133" width="1" height="1"/><rect x="762" y="147" width="3" height="3"/><rect x="763" y="146" width="1" height="1"/><rect x="770" y="246" width="3" height="3"/><rect x="771" y="245" width="1" height="1"/><rect x="778" y="244" width="3" height="3"/><rect x="779" y="243" width="1" height="1"/><rect x="786" y="242" width="3" height="3"/><rect x="787" y="241" width="1" height="1"/><rect x="794" y="241" width="3" height="3"/><rect x="795" y="240" width="1" height="1"/><rect x="802" y="239" width="3" height="3"/><rect x="803" y="238" width="1" height="1"/><rect x="810" y="237" width="3" height="3"/><rect x="811" y="236" width="1" height="1"/><rect x="818" y="235" width="3" height="3"/><rect x="819" y="234" width="1" height="1"/><rect x="826" y="234" width="3" height="3"/><rect x="827" y="233" width="1" height="1"/><rect x="834" y="229" width="3" height="3"/><rect x="835" y="228" width="1" height="1"/><rect x="842" y="225" width="3" height="3"/><rect x="843" y="224" width="1" height="1"/><rect x="850" y="220" width="3" height="3"/><rect x="851" y="219" width="1" height="1"/><rect x="858" y="117" width="3" height="3"/><rect x="859" y="116" width="1" height="1"/><rect x="866" y="119" width="3" height="3"/><rect x="867" y="118" width="1" height="1"/><rect x="874" y="121" width="3" height="3"/><rect x="875" y="120" width="1" height="1"/><rect x="882" y="126" width="3" height="3"/><rect x="883" y="125" width="1" height="1"/><rect x="890" y="130" width="3" height="3"/><rect x="891" y="129" width="1" height="1"/><rect x="898" y="134" width="3" height="3"/><rect x="899" y="133" width="1" height="1"/><rect x="906" y="138" width="3" height="3"/><rect x="907" y="137" width="1" height="1"/><rect x="914" y="142" width="3" height="3"/><rect x="915" y="141" width="1" height="1"/><rect x="922" y="145" width="3" height="3"/><rect x="923" y="144" width="1" height="1"/><rect x="930" y="233" width="3" height="3"/><rect x="931" y="232" width="1" height="1"/><rect x="938" y="243" width="3" height="3"/><rect x="939" y="242" width="1" height="1"/><rect x="946" y="243" width="3" height="3"/><rect x="947" y="242" width="1" height="1"/><rect x="954" y="241" width="3" height="3"/><rect x="955" y="240" width="1" height="1"/><rect x="962" y="239" width="3" height="3"/><rect x="963" y="238" width="1" height="1"/><rect x="970" y="237" width="3" height="3"/><rect x="971" y="236" width="1" height="1"/><rect x="978" y="235" width="3" height="3"/><rect x="979" y="234" width="1" height="1"/><rect x="986" y="140" width="3" height="3"/><rect x="987" y="139" width="1" height="1"/><rect x="994" y="143" width="3" height="3"/><rect x="995" y="142" width="1" height="1"/><rect x="1002" y="147" width="3" height="3"/><rect x="1003" y="146" width="1" height="1"/><rect x="1010" y="152" width="3" height="3"/><rect x="1011" y="151" width="1" height="1"/><rect x="1018" y="156" width="3" height="3"/><rect x="1019" y="155" width="1" height="1"/><rect x="1026" y="163" width="3" height="3"/><rect x="1027" y="162" width="1" height="1"/><rect x="1034" y="173" width="3" height="3"/><rect x="1035" y="172" width="1" height="1"/><rect x="1042" y="183" width="3" height="3"/><rect x="1043" y="182" width="1" height="1"/><rect x="1050" y="192" width="3" height="3"/><rect x="1051" y="191" width="1" height="1"/><rect x="1058" y="200" width="3" height="3"/><rect x="1059" y="199" width="1" height="1"/><rect x="1066" y="208" width="3" height="3"/><rect x="1067" y="207" width="1" height="1"/><rect x="1074" y="208" width="3" height="3"/><rect x="1075" y="207" width="1" height="1"/><rect x="1082" y="220" width="3" height="3"/><rect x="1083" y="219" width="1" height="1"/><rect x="1090" y="231" width="3" height="3"/><rect x="1091" y="230" width="1" height="1"/><rect x="1098" y="311" width="3" height="3"/><rect x="1099" y="310" width="1" height="1"/><rect x="1106" y="309" width="3" height="3"/><rect x="1107" y="308" width="1" height="1"/><rect x="1114" y="306" width="3" height="3"/><rect x="1115" y="305" width="1" height="1"/><rect x="1122" y="300" width="3" height="3"/><rect x="1123" y="299" width="1" height="1"/><rect x="1130" y="294" width="3" height="3"/><rect x="1131" y="293" width="1" height="1"/><rect x="1138" y="289" width="3" height="3"/><rect x="1139" y="288" width="1" height="1"/><rect x="1146" y="284" width="3" height="3"/><rect x="1147" y="283" width="1" height="1"/><rect x="1154" y="281" width="3" height="3"/><rect x="1155" y="280" width="1" height="1"/><rect x="1162" y="281" width="3" height="3"/><rect x="1163" y="280" width="1" height="1"/><rect x="1170" y="280" width="3" height="3"/><rect x="1171" y="279" width="1" height="1"/><rect x="1178" y="205" width="3" height="3"/><rect x="1179" y="204" width="1" height="1"/><rect x="1186" y="207" width="3" height="3"/><rect x="1187" y="206" width="1" height="1"/><rect x="1194" y="211" width="3" height="3"/><rect x="1195" y="210" width="1" height="1"/><rect x="1202" y="215" width="3" height="3"/><rect x="1203" y="214" width="1" height="1"/><rect x="1210" y="219" width="3" height="3"/><rect x="1211" y="218" width="1" height="1"/></g><path d="M3.5,412 L-2.0,421.5 L3.5,419 Z" fill="#00FFFF"/><path d="M3.5,412 L9.0,421.5 L3.5,419 Z" fill="none" stroke="#008B8B" stroke-width="0.9"/><path d="M51.5,451 L46.0,460.5 L51.5,458 Z" fill="#00FFFF"/><path d="M51.5,451 L57.0,460.5 L51.5,458 Z" fill="none" stroke="#008B8B" stroke-width="0.9"/><path d="M131.5,399 L126.0,408.5 L131.5,406 Z" fill="#00FFFF"/><path d="M131.5,399 L137.0,408.5 L131.5,406 Z" fill="none" stroke="#008B8B" stroke-width="0.9"/><path d="M211.5,273 L206.0,282.5 L211.5,280 Z" fill="#00FFFF"/><path d="M211.5,273 L217.0,282.5 L211.5,280 Z" fill="none" stroke="#008B8B" stroke-width="0.9"/><path d="M251.5,298 L246.0,307.5 L251.5,305 Z" fill="#00FFFF"/><path d="M251.5,298 L257.0,307.5 L251.5,305 Z" fill="none" stroke="#008B8B" stroke-width="0.9"/><path d="M307.5,328 L302.0,337.5 L307.5,335 Z" fill="#00FFFF"/><path d="M307.5,328 L313.0,337.5 L307.5,335 Z" fill="none" stroke="#008B8B" stroke-width="0.9"/><path d="M419.5,371 L414.0,380.5 L419.5,378 Z" fill="#00FFFF"/><path d="M419.5,371 L425.0,380.5 L419.5,378 Z" fill="none" stroke="#008B8B" stroke-width="0.9"/><path d="M475.5,295 L470.0,304.5 L475.5,302 Z" fill="#00FFFF"/><path d="M475.5,295 L481.0,304.5 L475.5,302 Z" fill="none" stroke="#008B8B" stroke-width="0.9"/><path d="M579.5,29 L574.0,38.5 L579.5,36 Z" fill="#00FFFF"/><path d="M579.5,29 L585.0,38.5 L579.5,36 Z" fill="none" stroke="#008B8B" stroke-width="0.9"/><path d="M659.5,14 L654.0,23.5 L659.5,21 Z" fill="#00FFFF"/><path d="M659.5,14 L665.0,23.5 L659.5,21 Z" fill="none" stroke="#008B8B" stroke-width="0.9"/><path d="M771.5,142 L766.0,151.5 L771.5,149 Z" fill="#00FFFF"/><path d="M771.5,142 L777.0,151.5 L771.5,149 Z" fill="none" stroke="#008B8B" stroke-width="0.9"/><path d="M827.5,104 L822.0,113.5 L827.5,111 Z" fill="#00FFFF"/><path d="M827.5,104 L833.0,113.5 L827.5,111 Z" fill="none" stroke="#008B8B" stroke-width="0.9"/><path d="M851.5,109 L846.0,118.5 L851.5,116 Z" fill="#00FFFF"/><path d="M851.5,109 L857.0,118.5 L851.5,116 Z" fill="none" stroke="#008B8B" stroke-width="0.9"/><path d="M899.5,164 L894.0,173.5 L899.5,171 Z" fill="#00FFFF"/><path d="M899.5,164 L905.0,173.5 L899.5,171 Z" fill="none" stroke="#008B8B" stroke-width="0.9"/><path d="M931.5,127 L926.0,136.5 L931.5,134 Z" fill="#00FFFF"/><path d="M931.5,127 L937.0,136.5 L931.5,134 Z" fill="none" stroke="#008B8B" stroke-width="0.9"/><path d="M955.5,130 L950.0,139.5 L955.5,137 Z" fill="#00FFFF"/><path d="M955.5,130 L961.0,139.5 L955.5,137 Z" fill="none" stroke="#008B8B" stroke-width="0.9"/><path d="M1003.5,181 L998.0,190.5 L1003.5,188 Z" fill="#00FFFF"/><path d="M1003.5,181 L1009.0,190.5 L1003.5,188 Z" fill="none" stroke="#008B8B" stroke-width="0.9"/><path d="M1059.5,195 L1054.0,204.5 L1059.5,202 Z" fill="#00FFFF"/><path d="M1059.5,195 L1065.0,204.5 L1059.5,202 Z" fill="none" stroke="#008B8B" stroke-width="0.9"/><path d="M1115.5,192 L1110.0,201.5 L1115.5,199 Z" fill="#00FFFF"/><path d="M1115.5,192 L1121.0,201.5 L1115.5,199 Z" fill="none" stroke="#008B8B" stroke-width="0.9"/><path d="M1171.5,215 L1166.0,224.5 L1171.5,222 Z" fill="#00FFFF"/><path d="M1171.5,215 L1177.0,224.5 L1171.5,222 Z" fill="none" stroke="#008B8B" stroke-width="0.9"/><path d="M43.5,530 L49.0,520.5 L43.5,523 Z" fill="#00FFFF"/><path d="M43.5,530 L38.0,520.5 L43.5,523 Z" fill="none" stroke="#008B8B" stroke-width="0.9"/><path d="M91.5,524 L97.0,514.5 L91.5,517 Z" fill="#00FFFF"/><path d="M91.5,524 L86.0,514.5 L91.5,517 Z" fill="none" stroke="#008B8B" stroke-width="0.9"/><path d="M147.5,508 L153.0,498.5 L147.5,501 Z" fill="#00FFFF"/><path d="M147.5,508 L142.0,498.5 L147.5,501 Z" fill="none" stroke="#008B8B" stroke-width="0.9"/><path d="M235.5,384 L241.0,374.5 L235.5,377 Z" fill="#00FFFF"/><path d="M235.5,384 L230.0,374.5 L235.5,377 Z" fill="none" stroke="#008B8B" stroke-width="0.9"/><path d="M291.5,403 L297.0,393.5 L291.5,396 Z" fill="#00FFFF"/><path d="M291.5,403 L286.0,393.5 L291.5,396 Z" fill="none" stroke="#008B8B" stroke-width="0.9"/><path d="M387.5,463 L393.0,453.5 L387.5,456 Z" fill="#00FFFF"/><path d="M387.5,463 L382.0,453.5 L387.5,456 Z" fill="none" stroke="#008B8B" stroke-width="0.9"/><path d="M435.5,485 L441.0,475.5 L435.5,478 Z" fill="#00FFFF"/><path d="M435.5,485 L430.0,475.5 L435.5,478 Z" fill="none" stroke="#008B8B" stroke-width="0.9"/><path d="M499.5,379 L505.0,369.5 L499.5,372 Z" fill="#00FFFF"/><path d="M499.5,379 L494.0,369.5 L499.5,372 Z" fill="none" stroke="#008B8B" stroke-width="0.9"/><path d="M539.5,293 L545.0,283.5 L539.5,286 Z" fill="#00FFFF"/><path d="M539.5,293 L534.0,283.5 L539.5,286 Z" fill="none" stroke="#008B8B" stroke-width="0.9"/><path d="M611.5,181 L617.0,171.5 L611.5,174 Z" fill="#00FFFF"/><path d="M611.5,181 L606.0,171.5 L611.5,174 Z" fill="none" stroke="#008B8B" stroke-width="0.9"/><path d="M635.5,176 L641.0,166.5 L635.5,169 Z" fill="#00FFFF"/><path d="M635.5,176 L630.0,166.5 L635.5,169 Z" fill="none" stroke="#008B8B" stroke-width="0.9"/><path d="M731.5,262 L737.0,252.5 L731.5,255 Z" fill="#00FFFF"/><path d="M731.5,262 L726.0,252.5 L731.5,255 Z" fill="none" stroke="#008B8B" stroke-width="0.9"/><path d="M803.5,241 L809.0,231.5 L803.5,234 Z" fill="#00FFFF"/><path d="M803.5,241 L798.0,231.5 L803.5,234 Z" fill="none" stroke="#008B8B" stroke-width="0.9"/><path d="M835.5,213 L841.0,203.5 L835.5,206 Z" fill="#00FFFF"/><path d="M835.5,213 L830.0,203.5 L835.5,206 Z" fill="none" stroke="#008B8B" stroke-width="0.9"/><path d="M875.5,249 L881.0,239.5 L875.5,242 Z" fill="#00FFFF"/><path d="M875.5,249 L870.0,239.5 L875.5,242 Z" fill="none" stroke="#008B8B" stroke-width="0.9"/><path d="M931.5,259 L937.0,249.5 L931.5,252 Z" fill="#00FFFF"/><path d="M931.5,259 L926.0,249.5 L931.5,252 Z" fill="none" stroke="#008B8B" stroke-width="0.9"/><path d="M995.5,276 L1001.0,266.5 L995.5,269 Z" fill="#00FFFF"/><path d="M995.5,276 L990.0,266.5 L995.5,269 Z" fill="none" stroke="#008B8B" stroke-width="0.9"/><path d="M1027.5,308 L1033.0,298.5 L1027.5,301 Z" fill="#00FFFF"/><path d="M1027.5,308 L1022.0,298.5 L1027.5,301 Z" fill="none" stroke="#008B8B" stroke-width="0.9"/><path d="M1067.5,327 L1073.0,317.5 L1067.5,320 Z" fill="#00FFFF"/><path d="M1067.5,327 L1062.0,317.5 L1067.5,320 Z" fill="none" stroke="#008B8B" stroke-width="0.9"/><path d="M1147.5,297 L1153.0,287.5 L1147.5,290 Z" fill="#00FFFF"/><path d="M1147.5,297 L1142.0,287.5 L1147.5,290 Z" fill="none" stroke="#008B8B" stroke-width="0.9"/><path d="M1187.5,328 L1193.0,318.5 L1187.5,321 Z" fill="#00FFFF"/><path d="M1187.5,328 L1182.0,318.5 L1187.5,321 Z" fill="none" stroke="#008B8B" stroke-width="0.9"/><path d="M747.5,207.5 L756,215 L751.5,215 L751.5,225.5 L743.5,225.5 L743.5,215 L739,215 Z" fill="none" stroke="#FFFFFF" stroke-width="1.2"/><g shape-rendering="crispEdges"><rect x="747" y="198" width="1" height="26" fill="#00FF00"/><rect x="745" y="205" width="5" height="7" fill="#00FF00"/><rect x="746" y="206" width="3" height="5" fill="#fff"/></g><path d="M1222.5,344.5 L1231,344.5 L1231,355.5 L1235.5,355.5 L1227,363 L1218.5,355.5 L1222.5,355.5 Z" fill="none" stroke="#FFFFFF" stroke-width="1.2"/><text x="277.5" y="273" font-family='"Liberation Sans", sans-serif' font-size="13" fill="#00FF00" textLength="139" lengthAdjust="spacingAndGlyphs">Parabolic SAR(0.02,0.2)</text><text x="748.5" y="58" font-family='"Liberation Sans", sans-serif' font-size="13" fill="#00FF00" textLength="45.5" lengthAdjust="spacingAndGlyphs">Fractals</text><text x="548.5" y="401" font-family='"Liberation Sans", sans-serif' font-size="13" fill="#00FF00" textLength="127" lengthAdjust="spacingAndGlyphs">Donchian Channel(10)</text><text x="911.5" y="443" font-family='"Liberation Sans", sans-serif' font-size="19" fill="#FFA500" textLength="72" lengthAdjust="spacingAndGlyphs">MA(200)</text></g><path d="M6,9 L13,9 L9.5,13 Z" fill="#FFFFFF"/><text x="18.5" y="14.3" font-family='"Liberation Sans", sans-serif' font-size="10" fill="#FFFFFF" textLength="61.8" lengthAdjust="spacingAndGlyphs">#S-AMD,Daily</text><text x="87.4" y="14.3" font-family='"Liberation Sans", sans-serif' font-size="10" fill="#FFFFFF" textLength="100.6" lengthAdjust="spacingAndGlyphs">98.02 98.65 95.65 95.89</text><g clip-path="url(#cd)" shape-rendering="crispEdges"><g fill="#00FFFF"><rect x="2" y="557" width="3" height="23"/><rect x="10" y="557" width="3" height="23"/><rect x="18" y="560" width="3" height="20"/><rect x="26" y="563" width="3" height="17"/><rect x="34" y="567" width="3" height="13"/><rect x="42" y="570" width="3" height="10"/><rect x="50" y="571" width="3" height="9"/><rect x="58" y="572" width="3" height="8"/><rect x="66" y="573" width="3" height="7"/><rect x="74" y="574" width="3" height="6"/><rect x="82" y="575" width="3" height="5"/><rect x="90" y="575" width="3" height="5"/><rect x="98" y="574" width="3" height="6"/><rect x="106" y="574" width="3" height="6"/><rect x="114" y="575" width="3" height="5"/><rect x="122" y="572" width="3" height="8"/><rect x="130" y="571" width="3" height="9"/><rect x="138" y="571" width="3" height="9"/><rect x="146" y="572" width="3" height="8"/><rect x="154" y="570" width="3" height="10"/><rect x="162" y="567" width="3" height="13"/><rect x="170" y="562" width="3" height="18"/><rect x="178" y="558" width="3" height="22"/><rect x="186" y="555" width="3" height="25"/><rect x="194" y="554" width="3" height="26"/><rect x="202" y="552" width="3" height="28"/><rect x="210" y="550" width="3" height="30"/><rect x="218" y="550" width="3" height="30"/><rect x="226" y="551" width="3" height="29"/><rect x="234" y="553" width="3" height="27"/><rect x="242" y="554" width="3" height="26"/><rect x="250" y="554" width="3" height="26"/><rect x="258" y="555" width="3" height="25"/><rect x="266" y="556" width="3" height="24"/><rect x="274" y="557" width="3" height="23"/><rect x="282" y="560" width="3" height="20"/><rect x="290" y="563" width="3" height="17"/><rect x="298" y="564" width="3" height="16"/><rect x="306" y="566" width="3" height="14"/><rect x="314" y="568" width="3" height="12"/><rect x="322" y="570" width="3" height="10"/><rect x="330" y="571" width="3" height="9"/><rect x="338" y="574" width="3" height="6"/><rect x="346" y="576" width="3" height="4"/><rect x="354" y="577" width="3" height="3"/><rect x="362" y="578" width="3" height="2"/><rect x="370" y="580" width="3" height="1"/><rect x="378" y="580" width="3" height="3"/><rect x="386" y="580" width="3" height="6"/><rect x="394" y="580" width="3" height="7"/><rect x="402" y="580" width="3" height="7"/><rect x="410" y="580" width="3" height="7"/><rect x="418" y="580" width="3" height="6"/><rect x="426" y="580" width="3" height="4"/><rect x="434" y="580" width="3" height="8"/><rect x="442" y="580" width="3" height="8"/><rect x="450" y="580" width="3" height="6"/><rect x="458" y="580" width="3" height="3"/><rect x="466" y="579" width="3" height="1"/><rect x="474" y="576" width="3" height="4"/><rect x="482" y="574" width="3" height="6"/><rect x="490" y="573" width="3" height="7"/><rect x="498" y="571" width="3" height="9"/><rect x="506" y="568" width="3" height="12"/><rect x="514" y="565" width="3" height="15"/><rect x="522" y="560" width="3" height="20"/><rect x="530" y="558" width="3" height="22"/><rect x="538" y="555" width="3" height="25"/><rect x="546" y="554" width="3" height="26"/><rect x="554" y="553" width="3" height="27"/><rect x="562" y="547" width="3" height="33"/><rect x="570" y="539" width="3" height="41"/><rect x="578" y="535" width="3" height="45"/><rect x="586" y="535" width="3" height="45"/><rect x="594" y="535" width="3" height="45"/><rect x="602" y="536" width="3" height="44"/><rect x="610" y="538" width="3" height="42"/><rect x="618" y="536" width="3" height="44"/><rect x="626" y="539" width="3" height="41"/><rect x="634" y="540" width="3" height="40"/><rect x="642" y="539" width="3" height="41"/><rect x="650" y="538" width="3" height="42"/><rect x="658" y="538" width="3" height="42"/><rect x="666" y="539" width="3" height="41"/><rect x="674" y="540" width="3" height="40"/><rect x="682" y="544" width="3" height="36"/><rect x="690" y="548" width="3" height="32"/><rect x="698" y="555" width="3" height="25"/><rect x="706" y="561" width="3" height="19"/><rect x="714" y="566" width="3" height="14"/><rect x="722" y="571" width="3" height="9"/><rect x="730" y="574" width="3" height="6"/><rect x="738" y="577" width="3" height="3"/><rect x="746" y="579" width="3" height="1"/><rect x="754" y="579" width="3" height="1"/><rect x="762" y="578" width="3" height="2"/><rect x="770" y="578" width="3" height="2"/><rect x="778" y="578" width="3" height="2"/><rect x="786" y="579" width="3" height="1"/><rect x="794" y="579" width="3" height="1"/><rect x="802" y="580" width="3" height="1"/><rect x="810" y="580" width="3" height="1"/><rect x="826" y="578" width="3" height="2"/><rect x="834" y="576" width="3" height="4"/><rect x="842" y="575" width="3" height="5"/><rect x="850" y="575" width="3" height="5"/><rect x="858" y="577" width="3" height="3"/><rect x="866" y="579" width="3" height="1"/><rect x="874" y="580" width="3" height="2"/><rect x="882" y="580" width="3" height="2"/><rect x="890" y="580" width="3" height="4"/><rect x="898" y="580" width="3" height="4"/><rect x="906" y="580" width="3" height="4"/><rect x="914" y="580" width="3" height="3"/><rect x="922" y="580" width="3" height="1"/><rect x="930" y="580" width="3" height="3"/><rect x="938" y="580" width="3" height="2"/><rect x="946" y="580" width="3" height="1"/><rect x="954" y="578" width="3" height="2"/><rect x="962" y="579" width="3" height="1"/><rect x="970" y="580" width="3" height="1"/><rect x="978" y="580" width="3" height="3"/><rect x="986" y="580" width="3" height="5"/><rect x="994" y="580" width="3" height="5"/><rect x="1002" y="580" width="3" height="5"/><rect x="1010" y="580" width="3" height="7"/><rect x="1018" y="580" width="3" height="9"/><rect x="1026" y="580" width="3" height="11"/><rect x="1034" y="580" width="3" height="11"/><rect x="1042" y="580" width="3" height="12"/><rect x="1050" y="580" width="3" height="10"/><rect x="1058" y="580" width="3" height="13"/><rect x="1066" y="580" width="3" height="15"/><rect x="1074" y="580" width="3" height="16"/><rect x="1082" y="580" width="3" height="15"/><rect x="1090" y="580" width="3" height="12"/><rect x="1098" y="580" width="3" height="12"/><rect x="1106" y="580" width="3" height="10"/><rect x="1114" y="580" width="3" height="8"/><rect x="1122" y="580" width="3" height="6"/><rect x="1130" y="580" width="3" height="6"/><rect x="1138" y="580" width="3" height="6"/><rect x="1146" y="580" width="3" height="7"/><rect x="1154" y="580" width="3" height="7"/><rect x="1162" y="580" width="3" height="6"/><rect x="1170" y="580" width="3" height="6"/><rect x="1178" y="580" width="3" height="8"/><rect x="1186" y="580" width="3" height="9"/><rect x="1194" y="580" width="3" height="10"/><rect x="1202" y="580" width="3" height="12"/><rect x="1210" y="580" width="3" height="15"/></g></g><g clip-path="url(#cd)"><polyline points="3.5,556.5 19.5,556.5 27.5,557.7 35.5,558.5 43.5,560 51.5,561.8 59.5,564.2 67.5,565.7 75.5,567.2 83.5,569.2 91.5,570.8 99.5,571.8 107.5,573 115.5,574.3 123.5,574.6 131.5,574.6 139.5,573.4 155.5,573.4 163.5,572 171.5,570.8 179.5,567.7 187.5,566.5 195.5,564.3 203.5,562.3 211.5,560.5 219.5,558.5 227.5,556.5 235.5,555 243.5,553.4 275.5,553.4 283.5,554.6 291.5,556.5 299.5,557.4 307.5,559.2 315.5,560.5 323.5,562 331.5,564.2 339.5,566.2 347.5,568.2 355.5,570.3 363.5,571.8 371.5,573.8 379.5,575.4 387.5,577.4 395.5,579.2 403.5,580.8 411.5,582.3 419.5,583.8 427.5,584.6 435.5,585.4 443.5,585.4 451.5,586.6 459.5,586.6 467.5,585.4 475.5,584.2 483.5,582.6 491.5,581.2 499.5,579.5 507.5,577.7 515.5,575.4 523.5,573 531.5,570 539.5,567.2 547.5,564.6 555.5,562.3 563.5,559.2 571.5,555.4 579.5,552.3 587.5,549.2 595.5,545.4 603.5,543.5 611.5,541 619.5,539.5 627.5,538.5 635.5,537.4 659.5,537.4 667.5,538.5 675.5,538.5 683.5,539.5 691.5,540.5 699.5,542.3 707.5,544.2 715.5,547.2 723.5,550.8 731.5,555.4 739.5,560 747.5,563.8 755.5,567.7 763.5,571.2 771.5,574.6 779.5,576.2 787.5,577.4 795.5,578.5 803.5,578.5 811.5,579.5 827.5,579.5 835.5,578.5 891.5,578.5 899.5,579.5 907.5,580.5 915.5,581.5 931.5,581.5 939.5,582.6 955.5,582.6 963.5,581.5 979.5,581.5 987.5,580.5 995.5,581.5 1011.5,581.5 1019.5,582.6 1027.5,583.8 1035.5,584.6 1043.5,585.4 1051.5,586.6 1059.5,587.2 1067.5,588.5 1075.5,589.4 1083.5,590.3 1091.5,591.2 1099.5,592.3 1115.5,592.3 1123.5,591.4 1131.5,590.8 1139.5,589.5 1147.5,588.5 1163.5,588.3 1171.5,586.5 1195.5,586.5 1203.5,587.7 1211.5,588.5" fill="none" stroke="#FF0000" stroke-width="1" shape-rendering="crispEdges"/></g><rect x="6" y="534" width="132" height="11" fill="#00FFFF"/><text x="8" y="542.6" font-family='"Liberation Sans", sans-serif' font-size="9" fill="#FFFFFF" textLength="123" lengthAdjust="spacingAndGlyphs">MACD(12,26,9) -2.405 -1.425</text><g clip-path="url(#cr)"><line x1="3" y1="654.5" x2="1260" y2="654.5" stroke="#00FFFF" stroke-width="1" stroke-dasharray="3 3" shape-rendering="crispEdges"/><line x1="6" y1="654.5" x2="1260" y2="654.5" stroke="#FF00FF" stroke-width="1" stroke-dasharray="3 3" shape-rendering="crispEdges"/><line x1="3" y1="724.5" x2="1260" y2="724.5" stroke="#00FFFF" stroke-width="1" stroke-dasharray="3 3" shape-rendering="crispEdges"/><line x1="6" y1="724.5" x2="1260" y2="724.5" stroke="#FF00FF" stroke-width="1" stroke-dasharray="3 3" shape-rendering="crispEdges"/><polyline points="3.5,664.6 11.5,667.4 19.5,686.5 27.5,691.5 35.5,696.2 43.5,696.2 51.5,686.5 59.5,691 67.5,689.5 75.5,689.5 83.5,691.5 91.5,681.8 99.5,678.5 107.5,680.3 115.5,676.2 123.5,665.4 131.5,672.3 139.5,679.2 147.5,682.3 155.5,663.8 163.5,657.7 171.5,645.8 179.5,643.4 187.5,648.5 195.5,653 203.5,648.5 211.5,644.3 219.5,655.7 227.5,661.5 235.5,671 243.5,667 251.5,662.3 259.5,662.3 267.5,669.2 275.5,672.6 283.5,687.4 291.5,687.4 299.5,676.6 307.5,681.5 315.5,690.5 323.5,691 331.5,692.3 339.5,700.3 347.5,700.3 355.5,699.2 363.5,698.5 371.5,706.2 379.5,710 387.5,723.8 395.5,711 403.5,701.5 411.5,692 419.5,690.5 427.5,689.2 435.5,719.2 443.5,697 451.5,689.2 459.5,673.5 467.5,673 475.5,668.5 483.5,668.5 491.5,675.4 499.5,669.5 507.5,660.3 515.5,655.7 523.5,648.5 531.5,657.2 539.5,653 547.5,652.3 555.5,652.3 563.5,635 571.5,630.5 579.5,635.4 587.5,660 595.5,658.5 603.5,663.4 611.5,662.3 619.5,653.5 627.5,671 635.5,667 643.5,660.3 651.5,655.4 659.5,667.4 667.5,663.4 675.5,671.5 683.5,681.2 691.5,683.4 699.5,697 707.5,699.2 715.5,700.8 723.5,705.4 731.5,698.5 739.5,698.5 747.5,695.4 755.5,687.7 763.5,684.3 771.5,689.2 779.5,690.5 787.5,691 795.5,690.5 803.5,697.2 811.5,686.2 819.5,682.3 827.5,682.3 835.5,675.4 843.5,676.6 851.5,681.5 859.5,702.3 867.5,700.3 875.5,701.2 883.5,692.3 891.5,701.2 899.5,697.2 907.5,690 915.5,685.8 923.5,675.7 931.5,701.2 939.5,691 947.5,683.4 955.5,680.8 963.5,690 971.5,698.5 979.5,698.5 987.5,705 995.5,691.5 1003.5,693 1011.5,703.8 1019.5,709.2 1027.5,706.2 1035.5,697.7 1043.5,703 1051.5,692.6 1059.5,709 1067.5,707.4 1075.5,706.5 1083.5,696.2 1091.5,694.6 1099.5,696.2 1107.5,685.6 1115.5,682.4 1123.5,685.6 1131.5,694.2 1139.5,696.4 1147.5,698.2 1155.5,698.2 1163.5,689.3 1171.5,693.4 1179.5,708.5 1187.5,705.4 1195.5,707.2 1203.5,710.6 1211.5,720.5" fill="none" stroke="#00FFFF" stroke-width="1" shape-rendering="crispEdges"/></g><rect x="6" y="604" width="76" height="11" fill="#00FFFF"/><text x="8" y="612.6" font-family='"Liberation Sans", sans-serif' font-size="9" fill="#FFFFFF" textLength="67" lengthAdjust="spacingAndGlyphs">RSI(13) 31.7216</text><g fill="none" stroke="#FFFFFF" stroke-width="1" shape-rendering="crispEdges"><rect x="2.5" y="2.5" width="1258" height="526"/><rect x="2.5" y="530.5" width="1258" height="68"/><rect x="2.5" y="600.5" width="1258" height="177"/></g><g font-family='"Liberation Sans", sans-serif' font-size="9.2" fill="#FFFFFF"><rect x="1261" y="30" width="3" height="1" fill="#fff"/><text x="1266.3" y="34" textLength="28" lengthAdjust="spacingAndGlyphs">132.10</text><rect x="1261" y="63" width="3" height="1" fill="#fff"/><text x="1266.3" y="67" textLength="28" lengthAdjust="spacingAndGlyphs">128.30</text><rect x="1261" y="96" width="3" height="1" fill="#fff"/><text x="1266.3" y="100" textLength="28" lengthAdjust="spacingAndGlyphs">124.40</text><rect x="1261" y="129" width="3" height="1" fill="#fff"/><text x="1266.3" y="133" textLength="28" lengthAdjust="spacingAndGlyphs">120.60</text><rect x="1261" y="162" width="3" height="1" fill="#fff"/><text x="1266.3" y="166" textLength="28" lengthAdjust="spacingAndGlyphs">116.80</text><rect x="1261" y="195" width="3" height="1" fill="#fff"/><text x="1266.3" y="199" textLength="28" lengthAdjust="spacingAndGlyphs">112.90</text><rect x="1261" y="228" width="3" height="1" fill="#fff"/><text x="1266.3" y="232" textLength="28" lengthAdjust="spacingAndGlyphs">109.10</text><rect x="1261" y="261" width="3" height="1" fill="#fff"/><text x="1266.3" y="265" textLength="28" lengthAdjust="spacingAndGlyphs">105.30</text><rect x="1261" y="294" width="3" height="1" fill="#fff"/><text x="1266.3" y="298" textLength="28" lengthAdjust="spacingAndGlyphs">101.40</text><rect x="1261" y="327" width="3" height="1" fill="#fff"/><text x="1266.3" y="331" textLength="23" lengthAdjust="spacingAndGlyphs">97.60</text><rect x="1261" y="360" width="3" height="1" fill="#fff"/><text x="1266.3" y="364" textLength="23" lengthAdjust="spacingAndGlyphs">93.80</text><rect x="1261" y="393" width="3" height="1" fill="#fff"/><text x="1266.3" y="397" textLength="23" lengthAdjust="spacingAndGlyphs">89.90</text><rect x="1261" y="426" width="3" height="1" fill="#fff"/><text x="1266.3" y="430" textLength="23" lengthAdjust="spacingAndGlyphs">86.10</text><rect x="1261" y="459" width="3" height="1" fill="#fff"/><text x="1266.3" y="463" textLength="23" lengthAdjust="spacingAndGlyphs">82.30</text><rect x="1261" y="492" width="3" height="1" fill="#fff"/><text x="1266.3" y="496" textLength="23" lengthAdjust="spacingAndGlyphs">78.40</text><rect x="1261" y="525" width="3" height="1" fill="#fff"/><text x="1266.3" y="529" textLength="23" lengthAdjust="spacingAndGlyphs">74.60</text></g><rect x="1262" y="337" width="31" height="11" fill="#FFFFFF"/><text x="1266.3" y="346" font-family='"Liberation Sans", sans-serif' font-size="9.2" fill="#000000" textLength="23" lengthAdjust="spacingAndGlyphs">95.89</text><rect x="1261" y="532" width="3" height="1" fill="#fff"/><rect x="1261" y="580" width="3" height="1" fill="#fff"/><rect x="1263" y="533" width="25" height="10" fill="#00FFFF"/><text x="1264.5" y="541.5" font-family='"Liberation Sans", sans-serif' font-size="10" fill="#FFFFFF" textLength="22" lengthAdjust="spacingAndGlyphs">8.403</text><rect x="1263" y="575" width="20" height="10" fill="#00FFFF"/><text x="1264.5" y="583.5" font-family='"Liberation Sans", sans-serif' font-size="10" fill="#FFFFFF" textLength="17" lengthAdjust="spacingAndGlyphs">0.00</text><rect x="1263" y="586" width="28" height="11" fill="#00FFFF"/><text x="1264" y="595" font-family='"Liberation Sans", sans-serif' font-size="10" fill="#FFFFFF" textLength="25.5" lengthAdjust="spacingAndGlyphs">-3.099</text><rect x="1263" y="602" width="18" height="11" fill="#00FFFF"/><text x="1264.5" y="611" font-family='"Liberation Sans", sans-serif' font-size="10" fill="#FFFFFF" textLength="15" lengthAdjust="spacingAndGlyphs">100</text><rect x="1263" y="649" width="12" height="11" fill="#00FFFF"/><text x="1264.5" y="658" font-family='"Liberation Sans", sans-serif' font-size="10" fill="#FFFFFF" textLength="9" lengthAdjust="spacingAndGlyphs">70</text><rect x="1263" y="719" width="12" height="11" fill="#00FFFF"/><text x="1264.5" y="728" font-family='"Liberation Sans", sans-serif' font-size="10" fill="#FFFFFF" textLength="9" lengthAdjust="spacingAndGlyphs">30</text><rect x="1263" y="765" width="8" height="11" fill="#00FFFF"/><text x="1264.5" y="774" font-family='"Liberation Sans", sans-serif' font-size="10" fill="#FFFFFF" textLength="5" lengthAdjust="spacingAndGlyphs">0</text><g font-family='"Liberation Sans", sans-serif' font-size="10" fill="#FFFFFF"><rect x="3" y="778" width="1" height="3" fill="#fff"/><text x="2.7" y="790" textLength="51.3" lengthAdjust="spacingAndGlyphs">14 Feb 2023</text><rect x="67" y="778" width="1" height="3" fill="#fff"/><text x="66.7" y="790" textLength="51.3" lengthAdjust="spacingAndGlyphs">27 Feb 2023</text><rect x="131" y="778" width="1" height="3" fill="#fff"/><text x="130.7" y="790" textLength="46.3" lengthAdjust="spacingAndGlyphs">9 Mar 2023</text><rect x="195" y="778" width="1" height="3" fill="#fff"/><text x="194.7" y="790" textLength="50.9" lengthAdjust="spacingAndGlyphs">21 Mar 2023</text><rect x="259" y="778" width="1" height="3" fill="#fff"/><text x="258.7" y="790" textLength="50.9" lengthAdjust="spacingAndGlyphs">31 Mar 2023</text><rect x="323" y="778" width="1" height="3" fill="#fff"/><text x="322.7" y="790" textLength="49.699999999999996" lengthAdjust="spacingAndGlyphs">13 Apr 2023</text><rect x="387" y="778" width="1" height="3" fill="#fff"/><text x="386.7" y="790" textLength="49.9" lengthAdjust="spacingAndGlyphs">25 Apr 2023</text><rect x="451" y="778" width="1" height="3" fill="#fff"/><text x="450.7" y="790" textLength="49.3" lengthAdjust="spacingAndGlyphs">5 May 2023</text><rect x="515" y="778" width="1" height="3" fill="#fff"/><text x="514.7" y="790" textLength="53.3" lengthAdjust="spacingAndGlyphs">17 May 2023</text><rect x="579" y="778" width="1" height="3" fill="#fff"/><text x="578.7" y="790" textLength="53.9" lengthAdjust="spacingAndGlyphs">30 May 2023</text><rect x="643" y="778" width="1" height="3" fill="#fff"/><text x="642.7" y="790" textLength="44.3" lengthAdjust="spacingAndGlyphs">9 Jun 2023</text><rect x="707" y="778" width="1" height="3" fill="#fff"/><text x="706.7" y="790" textLength="49.3" lengthAdjust="spacingAndGlyphs">22 Jun 2023</text><rect x="771" y="778" width="1" height="3" fill="#fff"/><text x="770.7" y="790" textLength="40.9" lengthAdjust="spacingAndGlyphs">5 Jul 2023</text><rect x="835" y="778" width="1" height="3" fill="#fff"/><text x="834.7" y="790" textLength="46.3" lengthAdjust="spacingAndGlyphs">17 Jul 2023</text><rect x="899" y="778" width="1" height="3" fill="#fff"/><text x="898.7" y="790" textLength="46.3" lengthAdjust="spacingAndGlyphs">27 Jul 2023</text><rect x="963" y="778" width="1" height="3" fill="#fff"/><text x="962.7" y="790" textLength="47.3" lengthAdjust="spacingAndGlyphs">8 Aug 2023</text><rect x="1027" y="778" width="1" height="3" fill="#fff"/><text x="1026.7" y="790" textLength="52.3" lengthAdjust="spacingAndGlyphs">18 Aug 2023</text><rect x="1091" y="778" width="1" height="3" fill="#fff"/><text x="1090.7" y="790" textLength="52.3" lengthAdjust="spacingAndGlyphs">30 Aug 2023</text><rect x="1155" y="778" width="1" height="3" fill="#fff"/><text x="1154.7" y="790" textLength="51.3" lengthAdjust="spacingAndGlyphs">12 Sep 2023</text></g></svg></body></html>
